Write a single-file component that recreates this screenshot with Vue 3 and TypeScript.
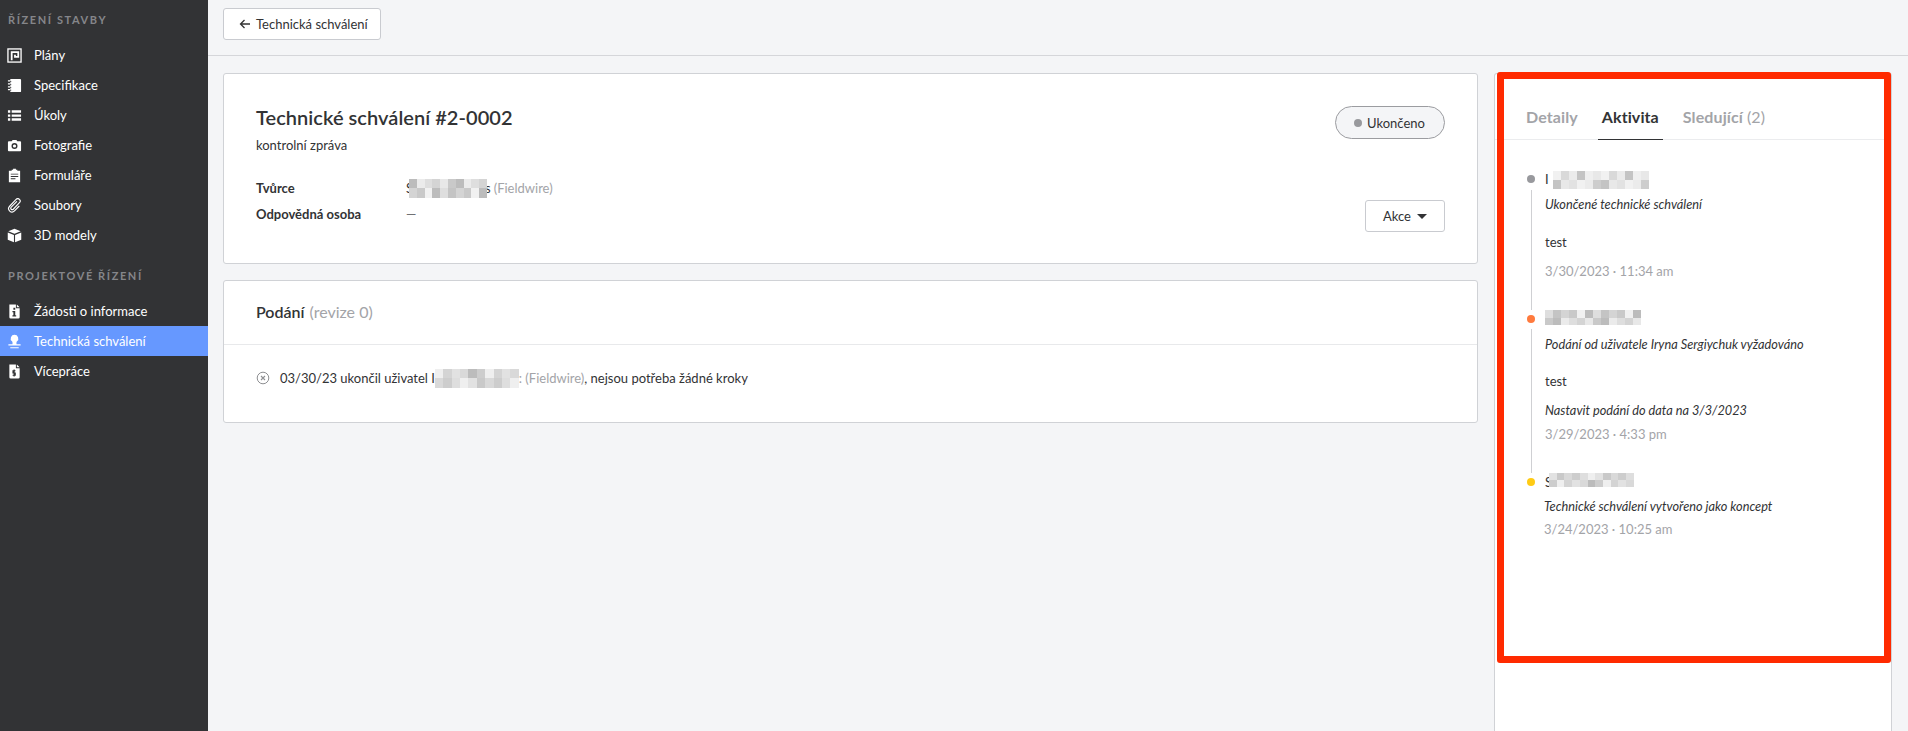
<script setup lang="ts">
const shades = ['#e8e8e8', '#d4d4d4', '#efefef', '#c4c4c4', '#dedede', '#cdcdcd', '#ebebeb', '#bcbcbc', '#d9d9d9', '#f1f1f1', '#c9c9c9', '#e2e2e2']
function cells(n: number, seed: number): string[] {
  return Array.from({ length: n * 2 }, (_, i) => shades[(i * 5 + seed * 7 + ((i * i) % 3)) % shades.length])
}
const group1 = [
  { label: 'Plány', icon: 'plans' },
  { label: 'Specifikace', icon: 'spec' },
  { label: 'Úkoly', icon: 'tasks' },
  { label: 'Fotografie', icon: 'photo' },
  { label: 'Formuláře', icon: 'forms' },
  { label: 'Soubory', icon: 'files' },
  { label: '3D modely', icon: 'cube' },
]
const group2 = [
  { label: 'Žádosti o informace', icon: 'rfi', active: false },
  { label: 'Technická schválení', icon: 'stamp', active: true },
  { label: 'Vícepráce', icon: 'money', active: false },
]
</script>

<template>
  <div class="page">
    <aside class="sidebar">
      <div class="section first">Řízení stavby</div>
      <a v-for="it in group1" :key="it.label" class="nav">
        <svg class="ico" viewBox="0 0 16 16">
          <template v-if="it.icon === 'plans'">
            <rect x="1" y="1" width="14" height="14" fill="none" stroke="#fff" stroke-width="1.400" />
            <path fill="none" stroke="#fff" stroke-width="1.900" d="M5 13V4.400h7V9.500H8.500V7.200" />
          </template>
          <template v-else-if="it.icon === 'spec'">
            <path fill="#fff" d="M3.500 1H14a1 1 0 0 1 1 1v12a1 1 0 0 1-1 1H3.500z" />
            <path stroke="#323335" stroke-width="1" d="M2.500 3.800h2M2.500 7h2M2.500 10.200h2M2.500 13h2" />
            <path stroke="#fff" stroke-width="1.200" d="M1 3h2.500M1 6.200h2.500M1 9.400h2.500M1 12.400h2.500" />
          </template>
          <template v-else-if="it.icon === 'tasks'">
            <path fill="#fff" d="M1 2.500h2.500V5H1zM5 2.500h10V5H5zM1 6.800h2.500v2.500H1zM5 6.800h10v2.500H5zM1 11h2.500v2.500H1zM5 11h10v2.500H5z" />
          </template>
          <template v-else-if="it.icon === 'photo'">
            <path fill-rule="evenodd" fill="#fff" d="M2 3.500h3L6 2h4l1 1.500h3a1 1 0 0 1 1 1V13a1 1 0 0 1-1 1H2a1 1 0 0 1-1-1V4.500a1 1 0 0 1 1-1zM8 5.300a3.200 3.200 0 1 0 0 6.400 3.200 3.200 0 0 0 0-6.400zM8 6.800a1.700 1.700 0 1 1 0 3.400 1.700 1.700 0 0 1 0-3.400z" />
          </template>
          <template v-else-if="it.icon === 'forms'">
            <path fill-rule="evenodd" fill="#fff" d="M6.500 1.800V.8h3v1h1.500V3H14v12.200H2V3h3V1.800zM4 6v1h8V6zM4 8.500v1h8v-1zM4 11v1h5v-1z" />
          </template>
          <template v-else-if="it.icon === 'files'">
            <path fill="none" stroke="#fff" stroke-width="1.200" stroke-linecap="round" d="M10.300 3.800 4.500 9.800a1.500 1.500 0 0 0 2.200 2.200l6.600-7a2.500 2.500 0 0 0-3.600-3.500L2.800 8.800a3.600 3.600 0 0 0 5.200 5l4.800-5" />
          </template>
          <template v-else>
            <path fill="#fff" d="M8 .8 14.600 3.500 8 6.200 1.400 3.500zM.8 4.800 7.400 7.500V15.200L.8 12.400zM15.200 4.800 8.600 7.500V15.200l6.600-2.800z" />
          </template>
        </svg>
        <span>{{ it.label }}</span>
      </a>

      <div class="section second">Projektové řízení</div>
      <a v-for="it in group2" :key="it.label" class="nav" :class="{ active: it.active }">
        <svg class="ico" viewBox="0 0 16 16">
          <template v-if="it.icon === 'rfi'">
            <path fill-rule="evenodd" fill="#fff" d="M2.500 .5H9.500V4.500h4V14a1.500 1.500 0 0 1-1.500 1.500H4A1.500 1.500 0 0 1 2.500 14zM10.500 .5l3 3h-3zM6.800 4v2h2V4zM5.800 7.500v1.200h1V12h-1v1.200h4V12h-1V7.500z" />
          </template>
          <template v-else-if="it.icon === 'stamp'">
            <path fill="#fff" d="M8 .8a4 4 0 0 1 2.700 7c-.6.600-.8 1.700-.5 3h4.300v1.500H1.500v-1.500h4.300c.3-1.300.1-2.400-.5-3A4 4 0 0 1 8 .8zM3.500 14h9v1.200h-9z" />
          </template>
          <template v-else>
            <path fill-rule="evenodd" fill="#fff" d="M2.500 .5H9.500V4.500h4V14a1.500 1.500 0 0 1-1.500 1.500H4A1.500 1.500 0 0 1 2.500 14zM10.500 .5l3 3h-3z" />
            <path fill="none" stroke="#323335" stroke-width="1.200" d="M9 7.200H6.400v2.400h2.400V12H6M7.600 5.800v7.600" />
          </template>
        </svg>
        <span>{{ it.label }}</span>
      </a>
    </aside>

    <div class="main">
      <header class="topbar">
        <button class="btn back">
          <svg class="arrow" viewBox="0 0 12 12"><path d="M11 6H1.500M5.500 2 1.500 6l4 4" fill="none" stroke="#333" stroke-width="1.300" /></svg>
          Technická schválení
        </button>
      </header>

      <div class="content">
        <div class="left">
          <section class="card info">
            <div class="info-top">
              <div>
                <h1>Technické schválení #2-0002</h1>
                <p class="sub">kontrolní zpráva</p>
              </div>
              <span class="pill"><i class="pill-dot"></i>Ukončeno</span>
            </div>
            <div class="info-bottom">
              <dl>
                <div class="row">
                  <dt>Tvůrce</dt>
                  <dd>
                    <span>S</span><span class="blur creator"><i v-for="(c, i) in cells(10, 1)" :key="i" :style="{ background: c }"></i></span><span class="tail">s</span>
                    <span class="muted">(Fieldwire)</span>
                  </dd>
                </div>
                <div class="row">
                  <dt>Odpovědná osoba</dt>
                  <dd class="dash">—</dd>
                </div>
              </dl>
              <button class="btn akce">Akce <i class="caret"></i></button>
            </div>
          </section>

          <section class="card sub-card">
            <h2>Podání <span class="muted rev">(revize 0)</span></h2>
            <div class="sub-body">
              <svg class="xc" viewBox="0 0 14 14"><circle cx="7" cy="7" r="5.800" fill="none" stroke="#8e8f92" stroke-width="1" /><path d="M5 5l4 4M9 5l-4 4" stroke="#8e8f92" stroke-width="1.100" /></svg>
              <span>03/30/23 ukončil uživatel I</span><span class="blur closer"><i v-for="(c, i) in cells(10, 2)" :key="i" :style="{ background: c }"></i></span><span class="muted rev">: (Fieldwire)</span><span>, nejsou potřeba žádné kroky</span>
            </div>
          </section>
        </div>

        <aside class="panel">
          <nav class="tabs">
            <span class="tab">Detaily</span>
            <span class="tab on">Aktivita</span>
            <span class="tab">Sledující <small>(2)</small></span>
          </nav>
          <div class="feed">
            <article class="ev ev1">
              <i class="dot gray"></i>
              <div class="who">I<span class="blur b1"><i v-for="(c, i) in cells(12, 3)" :key="i" :style="{ background: c }"></i></span></div>
              <div class="what">Ukončené technické schválení</div>
              <div class="note">test</div>
              <div class="when">3/30/2023 · 11:34 am</div>
            </article>
            <article class="ev ev2">
              <i class="dot orange"></i>
              <div class="who"><span class="blur b2"><i v-for="(c, i) in cells(12, 4)" :key="i" :style="{ background: c }"></i></span></div>
              <div class="what">Podání od uživatele Iryna Sergiychuk vyžadováno</div>
              <div class="note n2">test</div>
              <div class="what second-what">Nastavit podání do data na 3/3/2023</div>
              <div class="when tight">3/29/2023 · 4:33 pm</div>
            </article>
            <article class="ev ev3">
              <i class="dot yellow"></i>
              <div class="who">S<span class="blur b3"><i v-for="(c, i) in cells(11, 5)" :key="i" :style="{ background: c }"></i></span></div>
              <div class="what">Technické schválení vytvořeno jako koncept</div>
              <div class="when tight">3/24/2023 · 10:25 am</div>
            </article>
          </div>
          <div class="redbox"></div>
        </aside>
      </div>
    </div>
  </div>
</template>

<style>
html, body { margin: 0; background: #f4f5f7; }
</style>

<style scoped>
.page { display: flex; height: 731px; overflow: hidden; font-family: Lato, "Liberation Sans", sans-serif; font-size: 13px; color: #323335; background: #f4f5f7; }
.sidebar { width: 208px; flex: none; background: #323335; color: #fff; }
.section { font-size: 11px; font-weight: 700; letter-spacing: 1.6px; text-transform: uppercase; color: #85868a; padding-left: 8px; line-height: 16px; }
.section.first { margin-top: 12px; margin-bottom: 12px; }
.section.second { margin-top: 18px; margin-bottom: 12px; }
.nav { display: flex; align-items: center; height: 30px; gap: 12px; padding-left: 7px; }
.nav.active { background: #6698ff; }
.ico { width: 15px; height: 15px; flex: none; }
.main { flex: 1; min-width: 0; display: flex; flex-direction: column; }
.topbar { height: 56px; flex: none; border-bottom: 1px solid #d5d6da; padding: 8px 15px; box-sizing: border-box; }
.btn { background: #fff; border: 1px solid #c9cbd0; border-radius: 3px; font: inherit; color: #323335; height: 32px; box-sizing: border-box; display: inline-flex; align-items: center; white-space: nowrap; }
.back { width: 158px; padding: 0 0 0 15px; gap: 5px; }
.arrow { width: 12px; height: 12px; }
.content { flex: 1; display: flex; padding: 17px 16px 0 15px; gap: 16px; min-height: 0; }
.left { width: 1255px; flex: none; display: flex; flex-direction: column; gap: 16px; }
.card { background: #fff; border: 1px solid #d0d2d6; border-radius: 3px; box-sizing: border-box; }
.info { height: 191px; padding: 31px 32px 0; }
.info-top { display: flex; justify-content: space-between; align-items: flex-start; }
h1 { margin: 0; font-size: 20px; font-weight: 600; line-height: 24px; letter-spacing: 0.04px; }
.sub { margin: 7px 0 0; line-height: 18px; }
.pill { display: inline-flex; align-items: center; gap: 5px; width: 110px; height: 33px; margin-top: 1px; box-sizing: border-box; padding-left: 18px; border: 1px solid #9b9ca0; border-radius: 17px; background: #f4f5f7; }
.pill-dot { width: 8px; height: 8px; border-radius: 50%; background: #98999d; }
.info-bottom { display: flex; justify-content: space-between; align-items: flex-start; margin-top: 21px; }
dl { margin: 0; }
.row { display: flex; height: 26px; align-items: center; }
dt { width: 150px; font-weight: 700; }
dd { margin: 0; display: flex; align-items: center; gap: 0; }
.dash { color: #707174; }
.muted { color: #a3a4a8; font-weight: 400; margin-left: 3px; }
.rev { margin-left: 0; }
.akce { width: 80px; justify-content: center; gap: 6px; margin-top: 25px; padding: 0 0 0 0; }
.caret { width: 0; height: 0; border-left: 5px solid transparent; border-right: 5px solid transparent; border-top: 5px solid #323335; }
.sub-card { height: 143px; }
h2 { margin: 0; font-size: 16px; font-weight: 600; height: 63px; line-height: 62px; padding-left: 32px; border-bottom: 1px solid #e8e9eb; box-sizing: content-box; }
h2 .rev { margin-left: 1px; }
.sub-body { display: flex; align-items: center; height: 66px; padding-left: 32px; }
.xc { width: 14px; height: 14px; margin-right: 10px; }
.blur { display: inline-grid; grid-template-rows: 1fr 1fr; grid-auto-flow: column; grid-auto-columns: 8px; height: 19px; filter: blur(0.7px); }
.blur i { display: block; }
.creator { grid-auto-columns: 7.8px; margin-left: -4px; }
.tail { margin-left: -2px; }
.closer { grid-auto-columns: 8.4px; }
.panel { position: relative; flex: 1; background: #fff; border-left: 1px solid #d0d2d6; border-right: 1px solid #d0d2d6; border-top: 1px solid #d0d2d6; border-radius: 3px 3px 0 0; box-sizing: border-box; }
.tabs { display: flex; gap: 24px; height: 66px; padding: 0 0 0 31px; border-bottom: 1px solid #ebecee; box-sizing: border-box; align-items: flex-end; }
.tab { font-size: 16px; font-weight: 700; color: #a3a4a8; padding-bottom: 10px; line-height: 20px; height: 32px; box-sizing: border-box; letter-spacing: 0.1px; }
.tab small { font-size: 16px; font-weight: 400; }
.tab.on { color: #323335; padding: 0 4px 10px; margin: 0 -4px -1px; border-bottom: 1px solid #323335; height: 33px; }
.feed { padding: 30px 0 0 32px; }
.ev { position: relative; padding-left: 18px; }
.dot { position: absolute; left: 0; width: 8px; height: 8px; border-radius: 50%; top: 5px; }
.ev1::before, .ev2::before { content: ""; position: absolute; left: 4px; width: 1px; background: #cfd0d3; top: 20px; }
.ev1::before { height: 120px; }
.ev2::before { height: 144px; top: 19px; }
.gray { background: #98999d; }
.orange { background: #ff7a3d; }
.yellow { background: #ffcb14; }
.who { height: 19px; line-height: 19px; display: flex; align-items: flex-start; }
.b1 { margin: 1px 0 0 4px; height: 18px; }
.b2 { height: 15px; }
.b3 { margin: 0 0 0 -3px; height: 14px; grid-auto-columns: 7.7px; }
.what { font-style: italic; font-size: 12.75px; margin-top: 6px; line-height: 18px; }
.note { margin-top: 20px; line-height: 18px; }
.note.n2 { margin-top: 19px; }
.second-what { margin-top: 11px; }
.when { color: #a3a4a8; margin-top: 11px; line-height: 18px; }
.when.tight { margin-top: 6px; }
.ev1 { height: 140px; }
.ev2 { height: 163px; }
.ev3 .what { margin-left: -1px; margin-top: 5px; }
.ev3 .when { margin-left: -1px; margin-top: 5px; }
.redbox { position: absolute; left: 2px; top: -2px; width: 394px; height: 591px; box-sizing: border-box; border: 7px solid #ff2a00; border-radius: 3px; pointer-events: none; }
</style>
